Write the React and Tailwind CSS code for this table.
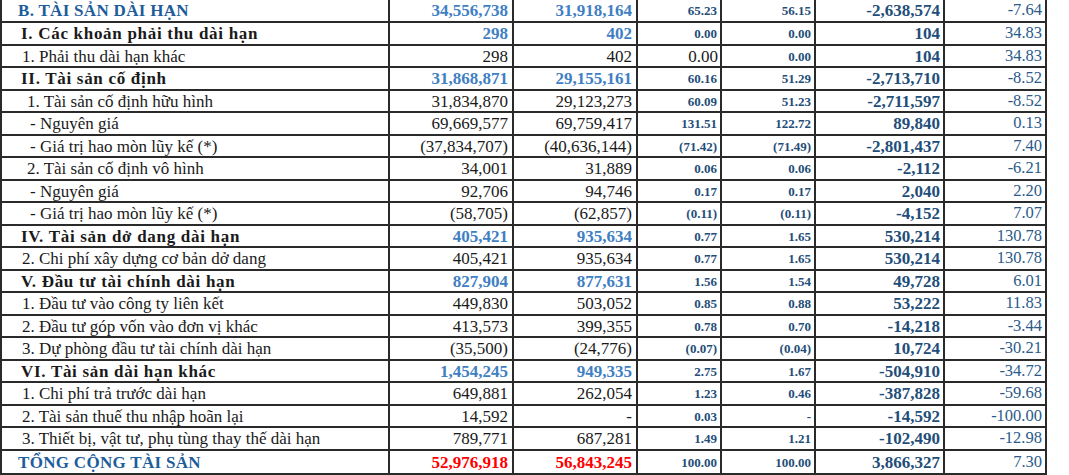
import React from "react";

const rows = [
  { t: "B", l: "B. TÀI SẢN DÀI HẠN", v: ["34,556,738", "31,918,164", "65.23", "56.15", "-2,638,574", "-7.64"] },
  { t: "S", l: "I. Các khoản phải thu dài hạn", v: ["298", "402", "0.00", "0.00", "104", "34.83"] },
  { t: "N", p: 1, l: "1. Phải thu dài hạn khác", v: ["298", "402", "0.00", "0.00", "104", "34.83"], plain4: true },
  { t: "S", l: "II. Tài sản cố định", v: ["31,868,871", "29,155,161", "60.16", "51.29", "-2,713,710", "-8.52"] },
  { t: "N", p: 2, l: "1. Tài sản cố định hữu hình", v: ["31,834,870", "29,123,273", "60.09", "51.23", "-2,711,597", "-8.52"] },
  { t: "N", p: 3, l: "- Nguyên giá", v: ["69,669,577", "69,759,417", "131.51", "122.72", "89,840", "0.13"] },
  { t: "N", p: 3, l: "- Giá trị hao mòn lũy kế (*)", v: ["(37,834,707)", "(40,636,144)", "(71.42)", "(71.49)", "-2,801,437", "7.40"] },
  { t: "N", p: 2, l: "2. Tài sản cố định vô hình", v: ["34,001", "31,889", "0.06", "0.06", "-2,112", "-6.21"] },
  { t: "N", p: 3, l: "- Nguyên giá", v: ["92,706", "94,746", "0.17", "0.17", "2,040", "2.20"] },
  { t: "N", p: 3, l: "- Giá trị hao mòn lũy kế (*)", v: ["(58,705)", "(62,857)", "(0.11)", "(0.11)", "-4,152", "7.07"] },
  { t: "S", l: "IV. Tài sản dở dang dài hạn", v: ["405,421", "935,634", "0.77", "1.65", "530,214", "130.78"] },
  { t: "N", p: 1, l: "2. Chi phí xây dựng cơ bản dở dang", v: ["405,421", "935,634", "0.77", "1.65", "530,214", "130.78"] },
  { t: "S", l: "V. Đầu tư tài chính dài hạn", v: ["827,904", "877,631", "1.56", "1.54", "49,728", "6.01"] },
  { t: "N", p: 1, l: "1. Đầu tư vào công ty liên kết", v: ["449,830", "503,052", "0.85", "0.88", "53,222", "11.83"] },
  { t: "N", p: 1, l: "2. Đầu tư góp vốn vào đơn vị khác", v: ["413,573", "399,355", "0.78", "0.70", "-14,218", "-3.44"] },
  { t: "N", p: 1, l: "3. Dự phòng đầu tư tài chính dài hạn", v: ["(35,500)", "(24,776)", "(0.07)", "(0.04)", "10,724", "-30.21"] },
  { t: "S", l: "VI. Tài sản dài hạn khác", v: ["1,454,245", "949,335", "2.75", "1.67", "-504,910", "-34.72"] },
  { t: "N", p: 1, l: "1. Chi phí trả trước dài hạn", v: ["649,881", "262,054", "1.23", "0.46", "-387,828", "-59.68"] },
  { t: "N", p: 1, l: "2. Tài sản thuế thu nhập hoãn lại", v: ["14,592", "-", "0.03", "-", "-14,592", "-100.00"] },
  { t: "N", p: 1, l: "3. Thiết bị, vật tư, phụ tùng thay thế dài hạn", v: ["789,771", "687,281", "1.49", "1.21", "-102,490", "-12.98"] },
  { t: "T", l: "TỔNG CỘNG TÀI SẢN", v: ["52,976,918", "56,843,245", "100.00", "100.00", "3,866,327", "7.30"] },
];

const heights = ["h-[23px]", "h-[22px]"];

function Label({ r }) {
  if (r.t === "B" || r.t === "T") {
    return (
      <div className="w-[390px] h-full border-l-2 border-r-2 border-[#2a2a2a] flex items-center pl-[16px] text-[17px] font-bold text-[#1d5d9b] tracking-[0.3px]">
        {r.l}
      </div>
    );
  }
  if (r.t === "S") {
    return (
      <div className="w-[390px] h-full border-l-2 border-r-2 border-[#2a2a2a] flex items-center pl-[19px] text-[17px] font-bold text-[#1a1a1a] tracking-[0.7px]">
        {r.l}
      </div>
    );
  }
  const pad = r.p === 3 ? "pl-[28px]" : r.p === 2 ? "pl-[25px]" : "pl-[20px]";
  return (
    <div className={"w-[390px] h-full border-l-2 border-r-2 border-[#2a2a2a] flex items-center text-[17px] text-[#1a1a1a] " + pad}>
      {r.l}
    </div>
  );
}

function Row({ r, i }) {
  const h = i === rows.length - 1 ? "h-[24px]" : i === 0 ? "h-[23px]" : heights[(i + 1) % 2];
  const top = r.t === "B" || r.t === "S";
  const tot = r.t === "T";
  const amt = tot
    ? "font-bold text-[#ff0000]"
    : top
    ? "font-bold text-[#3f7fc3]"
    : "text-[#1a1a1a]";
  return (
    <div className={"flex border-b-2 border-[#2a2a2a] " + h}>
      <Label r={r} />
      <div className={"w-[124px] h-full border-r-2 border-[#2a2a2a] flex items-center justify-end pr-[4px] text-[17px] " + amt}>
        {r.v[0]}
      </div>
      <div className={"w-[124px] h-full border-r-2 border-[#2a2a2a] flex items-center justify-end pr-[4px] text-[17px] " + amt}>
        {r.v[1]}
      </div>
      {r.plain4 ? (
        <div className="w-[84px] h-full border-r-2 border-[#2a2a2a] flex items-center justify-end pr-[2px] text-[17px] text-[#1a1a1a]">
          {r.v[2]}
        </div>
      ) : (
        <div className="w-[84px] h-full border-r-2 border-[#2a2a2a] flex items-center justify-end pr-[3px] text-[13px] font-bold text-[#1f4e79]">
          {r.v[2]}
        </div>
      )}
      <div className="w-[94px] h-full border-r-2 border-[#2a2a2a] flex items-center justify-end pr-[3px] text-[13px] font-bold text-[#1f4e79]">
        {r.v[3]}
      </div>
      <div className="w-[129px] h-full border-r-2 border-[#2a2a2a] flex items-center justify-end pr-[3px] text-[17px] font-bold text-[#1f4e79]">
        {r.v[4]}
      </div>
      <div className="w-[102px] h-full border-r-2 border-[#2a2a2a] flex items-center justify-end pr-[3px] text-[16.5px] text-[#2a5a8a]">
        {r.v[5]}
      </div>
    </div>
  );
}

export default function App() {
  return (
    <div className="w-[1069px] h-[475px] bg-white overflow-hidden leading-none" style={{ fontFamily: '"Liberation Serif", "Times New Roman", serif' }}>
      <div className="w-[1047px] flex flex-col">
        {rows.map((r, i) => (
          <Row key={i} r={r} i={i} />
        ))}
      </div>
    </div>
  );
}
